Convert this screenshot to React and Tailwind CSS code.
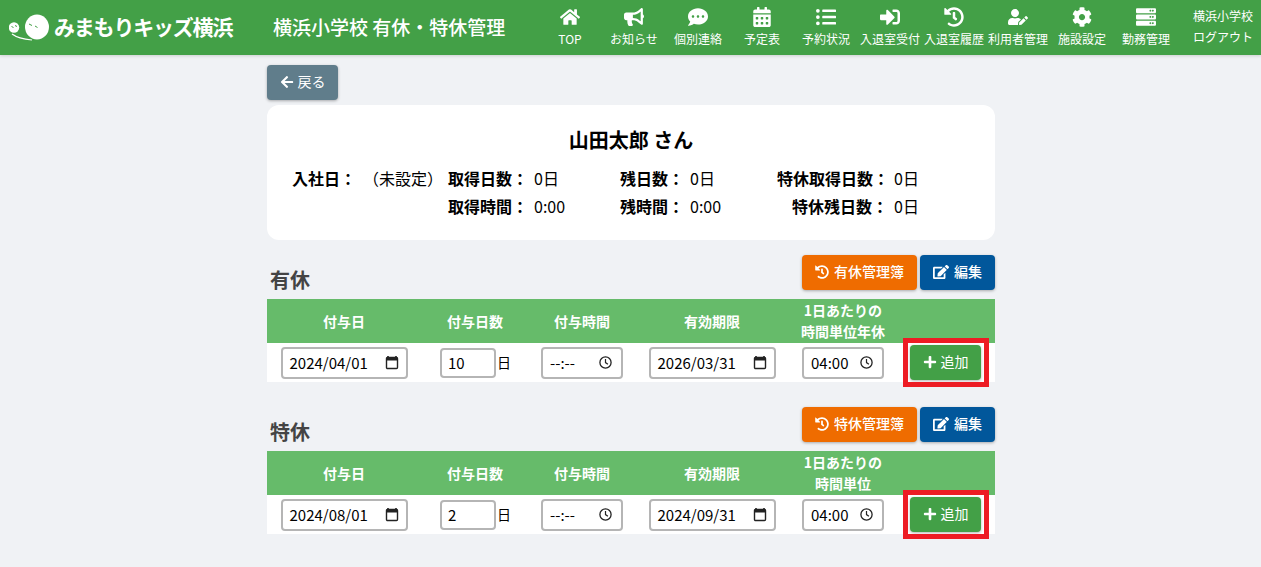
import { FaHome, FaBullhorn, FaCommentDots, FaCalendarAlt, FaListUl, FaSignInAlt, FaHistory, FaUserEdit, FaCog, FaServer, FaArrowLeft, FaEdit, FaPlus } from 'react-icons/fa';

const navItems = [
  { label: 'TOP', icon: FaHome },
  { label: 'お知らせ', icon: FaBullhorn },
  { label: '個別連絡', icon: FaCommentDots },
  { label: '予定表', icon: FaCalendarAlt },
  { label: '予約状況', icon: FaListUl },
  { label: '入退室受付', icon: FaSignInAlt },
  { label: '入退室履歴', icon: FaHistory },
  { label: '利用者管理', icon: FaUserEdit },
  { label: '施設設定', icon: FaCog },
  { label: '勤務管理', icon: FaServer },
];

const font = { fontFamily: '"Noto Sans CJK JP", "Noto Sans", sans-serif' };

function Logo() {
  return (
    <svg width="44" height="30" viewBox="0 0 44 30" className="shrink-0">
      <circle cx="5" cy="14.5" r="5.2" fill="#fff" />
      <ellipse cx="28" cy="14" rx="12" ry="12.5" fill="#fff" />
      <path d="M2.5 13.5l2 1M6 12.5l2 1M20 11l3 1.5M26 13l2.5 1.5" stroke="#43a047" strokeWidth="1" fill="none" />
      <path d="M3 21c4 3 10 5 20 6" stroke="#fff" strokeWidth="1.2" fill="none" />
    </svg>
  );
}

function DateField({ value }) {
  return (
    <div className="w-[127px] h-[32px] border-2 border-[#b5b5b5] rounded-[4px] bg-white flex items-center justify-between pl-[7px] pr-[7px]">
      <span className="text-[15px] text-black pt-[2px]">{value}</span>
      <CalendarIcon />
    </div>
  );
}

function CalendarIcon() {
  return (
    <svg width="14" height="15" viewBox="0 0 14 15" className="shrink-0">
      <path d="M3 1v2M11 1v2" stroke="#222" strokeWidth="1.6" />
      <rect x="1.5" y="2.5" width="11" height="11" rx="1" fill="none" stroke="#222" strokeWidth="1.4" />
      <rect x="1.5" y="2.5" width="11" height="3" fill="#222" />
    </svg>
  );
}

function TimeField({ value }) {
  return (
    <div className="w-[82px] h-[32px] border-2 border-[#b5b5b5] rounded-[4px] bg-white flex items-center justify-between pl-[7px] pr-[9px]">
      <span className="text-[15px] text-black pt-[2px]">{value}</span>
      <svg width="13" height="13" viewBox="0 0 13 13" className="shrink-0">
        <circle cx="6.5" cy="6.5" r="5.6" fill="none" stroke="#222" strokeWidth="1.3" />
        <path d="M6.5 3v3.6l2.4 1.6" fill="none" stroke="#222" strokeWidth="1.2" />
      </svg>
    </div>
  );
}

function LeaveSection({ title, bookLabel, hourLabel, row, className = '' }) {
  return (
    <section className={className}>
      <div className="flex items-end justify-between h-[44px]">
        <h2 className="text-[20px] font-bold text-[#444] pl-[3px] leading-[30px] mb-[4px]">{title}</h2>
        <div className="flex gap-[3px] self-start">
          <button className="h-[35px] w-[115px] pb-[2px] rounded-[4px] bg-[#ef6c00] text-white text-[14px] font-medium flex items-center justify-center gap-[5px] shadow-[0_1px_3px_rgba(0,0,0,0.3)]">
            <FaHistory className="text-[14px]" />{bookLabel}
          </button>
          <button className="h-[35px] w-[75px] pb-[2px] rounded-[4px] bg-[#01579b] text-white text-[14px] font-medium flex items-center justify-center gap-[5px] shadow-[0_1px_3px_rgba(0,0,0,0.3)]">
            <FaEdit className="text-[16px]" />編集
          </button>
        </div>
      </div>
      <div className="grid grid-cols-[154px_108px_106px_154px_108px_98px]">
        <div className="contents text-white text-[14px] font-bold text-center">
          <div className="h-[44px] bg-[#66bb6a] flex items-center justify-center">付与日</div>
          <div className="h-[44px] bg-[#66bb6a] flex items-center justify-center">付与日数</div>
          <div className="h-[44px] bg-[#66bb6a] flex items-center justify-center">付与時間</div>
          <div className="h-[44px] bg-[#66bb6a] flex items-center justify-center">有効期限</div>
          <div className="h-[44px] bg-[#66bb6a] flex items-center justify-center leading-[21px]">1日あたりの<br />{hourLabel}</div>
          <div className="h-[44px] bg-[#66bb6a]" />
        </div>
        <div className="contents">
          <div className="h-[39px] bg-white flex items-center justify-center"><DateField value={row.start} /></div>
          <div className="h-[39px] bg-white flex items-center pl-[19px] gap-[1px]">
            <div className="w-[56px] h-[30px] border-2 border-[#b5b5b5] rounded-[4px] flex items-center pl-[6px] pt-[2px] text-[15px] text-black">{row.days}</div>
            <span className="text-[14px] text-black">日</span>
          </div>
          <div className="h-[39px] bg-white flex items-center justify-center"><TimeField value="--:--" /></div>
          <div className="h-[39px] bg-white flex items-center justify-center"><DateField value={row.end} /></div>
          <div className="h-[39px] bg-white flex items-center justify-center"><TimeField value="04:00" /></div>
          <div className="h-[39px] bg-white flex items-center justify-start pl-[13px] relative">
            <button className="h-[35px] w-[71px] pb-[2px] rounded-[4px] bg-[#43a047] text-white text-[14px] flex items-center justify-center gap-[4px] shadow-[0_1px_3px_rgba(0,0,0,0.3)]">
              <FaPlus className="text-[14px]" />追加
            </button>
            <div className="absolute left-[6px] top-[-5px] w-[86px] h-[49px] border-[5px] border-[#ed1c24]" />
          </div>
        </div>
      </div>
    </section>
  );
}

export default function App() {
  return (
    <div className="min-h-screen bg-[#f0f2f5]" style={font}>
      <header className="h-[55px] bg-[#43a047] flex items-center text-white shadow-[0_1px_3px_rgba(0,0,0,0.15)]">
        <div className="w-[265px] pl-[9px] flex items-center gap-[1px] shrink-0">
          <Logo />
          <span className="text-[21px] font-bold tracking-[-1.2px] whitespace-nowrap -mt-[2px]">みまもりキッズ横浜</span>
        </div>
        <h1 className="text-[19px] font-medium whitespace-nowrap w-[265px] pl-[8px] shrink-0">横浜小学校 有休・特休管理</h1>
        <nav className="flex w-[640px] shrink-0 ml-[8px]">
          {navItems.map(item => (
            <a key={item.label} className="w-[64px] flex flex-col items-center whitespace-nowrap">
              <item.icon className="text-[20px] h-[20px] mb-[3px]" />
              <span className="text-[12px] leading-[18px]">{item.label}</span>
            </a>
          ))}
        </nav>
        <div className="ml-[15px] -mt-[2px] text-[12px] flex flex-col items-center gap-[3px] whitespace-nowrap">
          <span className="leading-[18px]">横浜小学校</span>
          <span className="leading-[18px]">ログアウト</span>
        </div>
      </header>

      <main className="w-[728px] ml-[267px] pt-[10px]">
        <button className="h-[35px] w-[71px] pb-[2px] rounded-[4px] bg-[#607d8b] text-white text-[14px] flex items-center justify-center gap-[4px] shadow-[0_1px_3px_rgba(0,0,0,0.3)]">
          <FaArrowLeft className="text-[14px]" />戻る
        </button>

        <div className="mt-[5px] h-[135px] bg-white rounded-[12px] pt-[21px] text-black">
          <h2 className="text-[20px] font-bold text-center leading-[28px]">山田太郎 さん</h2>
          <div className="mt-[10px] pl-[25px] grid grid-cols-[72px_84px_86px_86px_70px_87px_117px_auto] text-[16px] leading-[28px] whitespace-nowrap">
            <span className="font-bold">入社日：</span>
            <span className="-ml-[1px]">（未設定）</span>
            <span className="font-bold">取得日数：</span>
            <span>0日</span>
            <span className="font-bold">残日数：</span>
            <span>0日</span>
            <span className="font-bold text-right pr-[6px]">特休取得日数：</span>
            <span>0日</span>
            <span />
            <span />
            <span className="font-bold">取得時間：</span>
            <span>0:00</span>
            <span className="font-bold">残時間：</span>
            <span>0:00</span>
            <span className="font-bold text-right pr-[6px]">特休残日数：</span>
            <span>0日</span>
          </div>
        </div>

        <LeaveSection
          className="mt-[15px]"
          title="有休"
          bookLabel="有休管理簿"
          hourLabel="時間単位年休"
          row={{ start: '2024/04/01', days: '10', end: '2026/03/31' }}
        />
        <LeaveSection
          className="mt-[25px]"
          title="特休"
          bookLabel="特休管理簿"
          hourLabel="時間単位"
          row={{ start: '2024/08/01', days: '2', end: '2024/09/31' }}
        />
      </main>
    </div>
  );
}
